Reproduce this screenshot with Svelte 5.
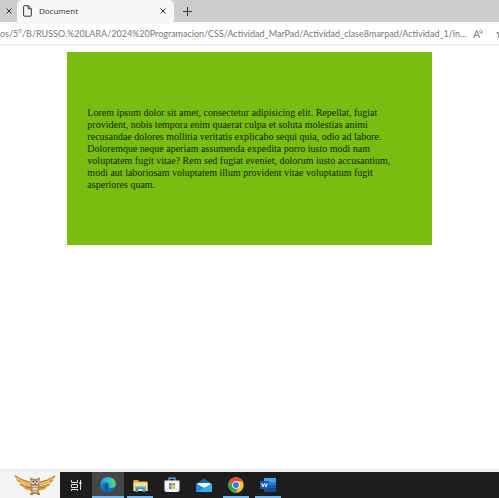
<script>
  const url = 'os/5°/B/RUSSO.%20LARA/2024%20Programacion/CSS/Actividad_MarPad/Actividad_clase8marpad/Actividad_1/in...';
</script>

<div class="screen">
  <header>
    <div class="tabs">
      <button class="close first" aria-label="Close previous tab">
        <svg width="6" height="6" viewBox="0 0 6 6"><path d="M.5.5 5.5 5.5M5.5.5.5 5.5" /></svg>
      </button>
      <div class="tab">
        <svg class="page-icon" width="9" height="12" viewBox="0 0 9 12"><path d="M.6 1.5Q.6.7 1.4.7H5.2L8.3 3.8V10.2Q8.3 11.2 7.4 11.2H1.5Q.6 11.2.6 10.3ZM5.2.7V3.8H8.3" /></svg>
        <span class="title">Document</span>
        <button class="close" aria-label="Close tab">
          <svg width="6" height="6" viewBox="0 0 6 6"><path d="M.5.5 5.5 5.5M5.5.5.5 5.5" /></svg>
        </button>
      </div>
      <button class="add" aria-label="New tab">
        <svg width="9" height="9" viewBox="0 0 9 9"><path d="M4.5 0V9M0 4.5H9" /></svg>
      </button>
    </div>
    <div class="toolbar">
      <input class="url" aria-label="Address" value={url} />
      <button class="tool" aria-label="Read aloud">
        <svg width="11" height="10" viewBox="0 0 11 10"><path d="M.7 9 3.7 1.4 6.7 9M1.7 6.4H5.7M6.3 2.3Q7.4 3 7.1 4.3M7.4.7Q9.6 2 9 4.6" /></svg>
      </button>
      <button class="tool star" aria-label="Favorites">
        <svg width="10" height="10" viewBox="0 0 10 10"><path d="m5 .8 1.2 2.7 3 .3L7 5.8l.6 3L5 7.3 2.4 8.8l.6-3L.8 3.8l3-.3Z" /></svg>
      </button>
    </div>
  </header>

  <main>
    <p>
      Lorem ipsum dolor sit amet, consectetur adipisicing elit. Repellat, fugiat<br />
      provident, nobis tempora enim quaerat culpa et soluta molestias animi<br />
      recusandae dolores mollitia veritatis explicabo sequi quia, odio ad labore.<br />
      Doloremque neque aperiam assumenda expedita porro iusto modi nam<br />
      voluptatem fugit vitae? Rem sed fugiat eveniet, dolorum iusto accusantium,<br />
      modi aut laboriosam voluptatem illum provident vitae voluptatum fugit<br />
      asperiores quam.
    </p>
  </main>

  <footer>
    <button class="owl" aria-label="Search highlights">
      <svg width="44" height="22" viewBox="0 0 44 22">
        <path fill="#d99a35" d="M1 1Q8 5 17 8L19 16Q14 17 11 14L13 13Q8 13 6 10L9 10Q4 8 3 5L6 6Q2 4 1 1ZM43 1Q36 5 27 8L25 16Q30 17 33 14L31 13Q36 13 38 10L35 10Q40 8 41 5L38 6Q42 4 43 1Z" />
        <path fill="none" stroke="#f4d088" stroke-width="1.2" d="M4 4Q10 8 17 10M7 8Q12 11 18 12M40 4Q34 8 27 10M37 8Q32 11 26 12" />
        <path fill="none" stroke="#8b541d" stroke-width=".5" d="M2 2Q9 7 17 8M10 13 18 13.5M42 2Q35 7 27 8M34 13 26 13.5" />
        <path fill="#a58a64" d="M17 3Q19 5 22 5T27 3L26.5 10Q27 17 25 20H19Q17 17 17.5 10Z" />
        <path fill="#e6d9bd" d="M18 7Q20 5 22 8 24 5 26 7L25 10H19ZM19 12H25L24 18H20Z" />
        <path fill="#4b3524" d="M19.5 7h1.5v1.5h-1.5zM23 7h1.5v1.5H23zM21.3 9h1.4L22 11z" />
        <path fill="#9b7c54" d="M19 13h6v.8h-6zM20 16h4v.8h-4z" />
        <path fill="#bd792b" d="M17 19h3v2h-3zM24 19h3v2h-3z" />
      </svg>
    </button>
    <button class="app" aria-label="Task view">
      <svg width="12" height="12" viewBox="0 0 12 12"><path fill="none" stroke="#ddd" d="M1.5 1V3.5H7.5V1M1.5 5.5H7.5V8.5H1.5ZM1.5 12V10.5H7.5V12M10.5 1V11" /><path fill="#fff" d="M9.5 3h2v2h-2z" /></svg>
    </button>
    <button class="app active open" aria-label="Microsoft Edge">
      <svg width="16" height="16" viewBox="0 0 16 16">
        <defs>
          <linearGradient id="edge-top"><stop stop-color="#249fe5" /><stop offset=".5" stop-color="#28c7d0" /><stop offset="1" stop-color="#68d552" /></linearGradient>
          <linearGradient id="edge-low" x2="0" y2="1"><stop stop-color="#2196dc" /><stop offset="1" stop-color="#1266b5" /></linearGradient>
        </defs>
        <circle cx="8" cy="8" r="7.8" fill="url(#edge-low)" />
        <path fill="url(#edge-top)" d="M.2 7.5C.7 3 4 .2 8 .2c4.5 0 7.8 3 7.8 6.5 0 2.5-2 4-4.3 4-2 0-3-.7-2.4-1.5C10.4 7.4 9 5 6 5 3 5 1 6 .2 7.5Z" />
        <path fill="#12519c" d="M6.5 6C4.5 7 4 9 5 11.5c1 2.3 3 3.5 5.2 3.6C7.5 13.5 5.8 9.5 7.8 7Z" />
        <path fill="#454648" d="M8 7.5C7 9.5 8 12.3 11 12.5c1.7.1 3-.4 4.3-1.3L14.5 12.7C11 14 6.5 11.5 8 7.5Z" />
      </svg>
    </button>
    <button class="app open" aria-label="File Explorer">
      <svg width="15" height="13" viewBox="0 0 15 13"><path fill="#e5a92f" d="M.5 1H5l1 1.5h8.5V12H.5Z" /><path fill="#ffe08a" d="M.5 3.5h14V12H.5Z" /><path fill="#3b94d3" d="M2.5 7h10v6h-2.7V10H5.2v3H2.5Z" /><path fill="#7fc5eb" d="M3 7h9v1.5H3Z" /></svg>
    </button>
    <button class="app" aria-label="Microsoft Store">
      <svg width="16" height="16" viewBox="0 0 16 16"><path fill="none" stroke="#58b9ee" stroke-width="1.2" d="M5 4V1.2h6V4" /><path fill="#f5f5f5" d="M.5 3.5h15V13Q15.5 15 13.5 15h-11Q.5 15 .5 13Z" /><path fill="#e85b3c" d="M5 6h2.700v2.700H5z" /><path fill="#78b943" d="M8.300 6H11v2.700H8.300z" /><path fill="#2f9bdc" d="M5 9.300h2.700V12H5z" /><path fill="#f3b932" d="M8.300 9.300H11V12H8.300z" /></svg>
    </button>
    <button class="app" aria-label="Mail">
      <svg width="16" height="15" viewBox="0 0 16 15"><path fill="#1469b3" d="M0 6 8 .5 16 6V14H0Z" /><path fill="#f2f7fa" d="M1.5 5h13v2L8 10 1.5 7Z" /><path fill="#1687d2" d="M0 6 16 14H0Z" /><path fill="#35aee9" d="M16 6V14H0Z" /></svg>
    </button>
    <button class="app open" aria-label="Google Chrome">
      <svg width="16" height="16" viewBox="0 0 16 16"><circle cx="8" cy="8" r="7.7" fill="#f8c52c" /><path fill="#e44b38" d="M1.3 4.2A7.7 7.7 0 0 1 14.7 4.2H8L4.7 10Z" /><path fill="#35a353" d="M1.3 4.2 4.7 10 8 11.8 11 10 7.5 15.7A7.7 7.7 0 0 1 1.3 4.2Z" /><circle cx="8" cy="8" r="3.8" fill="#fff" /><circle cx="8" cy="8" r="3" fill="#3979e5" /></svg>
    </button>
    <button class="app open" aria-label="Microsoft Word">
      <svg width="16" height="14" viewBox="0 0 16 14"><path fill="#42a4ec" d="M4 0H16V4H4Z" /><path fill="#2b7cd3" d="M4 4H16V7H4Z" /><path fill="#185abd" d="M4 7H16V10.5H4Z" /><path fill="#164a99" d="M4 10.5H16V14H4Z" /><path fill="#1758b2" d="M0 3H9V11H0Z" /><path fill="none" stroke="#fff" d="m1.7 5 1.2 4L4.5 5.5 6.1 9 7.3 5" /></svg>
    </button>
  </footer>
</div>

<style>
  :global(body) { margin: 0; }
  .screen {
    display: flex;
    flex-direction: column;
    min-height: 100vh;
    overflow: hidden;
    background: #fff;
    font-family: "Open Sans", "Noto Sans", sans-serif;
  }
  button {
    display: flex;
    align-items: center;
    justify-content: center;
    padding: 0;
    border: 0;
    background: none;
  }
  svg { display: block; flex: none; }
  .tabs {
    display: flex;
    height: 22px;
    background: #cdcdcd;
  }
  .tabs path { fill: none; stroke: #333; }
  .close { width: 16px; }
  .close.first { width: 17px; }
  .tab {
    display: flex;
    align-items: center;
    box-sizing: border-box;
    width: 157px;
    padding: 0 3px 0 6px;
    border-radius: 5px 5px 0 0;
    background: #f7f7f7;
  }
  .title {
    flex: 1;
    margin-left: 7px;
    font-size: 8px;
    line-height: 12px;
    color: #333;
  }
  .add { width: 26px; }
  .toolbar {
    display: flex;
    align-items: center;
    height: 20px;
    border-top: 2px solid #f7f7f7;
    border-bottom: 2px solid #f0f0f0;
    background: #fff;
  }
  .url {
    flex: 1;
    min-width: 0;
    height: 20px;
    padding: 0;
    border: 0;
    outline: 0;
    background: none;
    font: 9px/20px Lato, "Noto Sans", sans-serif;
    color: #777;
  }
  .tool { flex: none; width: 20px; margin-right: 8px; }
  .tool.star { width: 10px; margin-right: -7px; }
  .tool path { fill: none; stroke: #777; stroke-width: 1; }
  main { flex: 1; padding-top: 6px; }
  p {
    box-sizing: border-box;
    width: 73%;
    margin: 0 auto;
    padding: 55px 20px 54px;
    background: #78be12;
    font: 10px/12px "Liberation Serif", "Times New Roman", serif;
    color: #142506;
    white-space: nowrap;
  }
  footer {
    display: flex;
    height: 26px;
    border-top: 3px solid #ececec;
    background: #1d1d1d;
  }
  .owl {
    width: 60px;
    padding-left: 9px;
    background: #f3f3f3;
  }
  .app {
    width: 32px;
    border-top: 2px solid transparent;
    border-bottom: 2px solid transparent;
  }
  .app.active { background: #454648; }
  .app.open { border-bottom-color: #76b9ed; }
  .app.open:not(.active) {
    width: 26px;
    margin: 0 3px;
  }
</style>
